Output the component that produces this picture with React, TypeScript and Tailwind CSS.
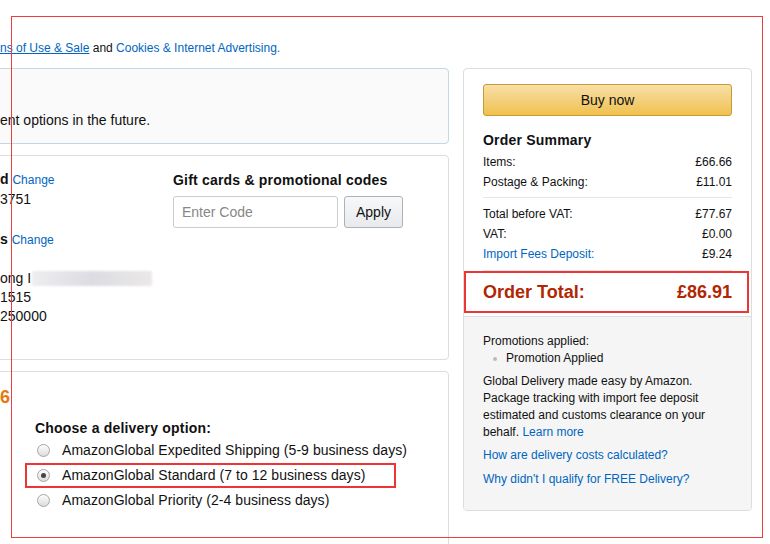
const Radio = ({ checked }: { checked?: boolean }) => (
  <span className="ml-[2px] flex size-[13px] shrink-0 items-center justify-center rounded-full border border-[#a6a6a6] bg-gradient-to-b from-[#fdfdfd] to-[#dcdcdc]">
    {checked && <span className="size-[5px] rounded-full bg-[#444]" />}
  </span>
);

const Row = ({ label, value, link }: { label: string; value: string; link?: boolean }) => (
  <div className="flex h-5 items-center justify-between text-[12px]">
    <span className={link ? "text-[#0066c0]" : ""}>{label}</span>
    <span>{value}</span>
  </div>
);

const options = [
  { label: "AmazonGlobal Expedited Shipping (5-9 business days)", checked: false },
  { label: "AmazonGlobal Standard (7 to 12 business days)", checked: true },
  { label: "AmazonGlobal Priority (2-4 business days)", checked: false },
];

export default function App() {
  return (
    <div className="relative h-[544px] w-[770px] overflow-hidden bg-white pt-10 font-['Liberation_Sans',Arial,sans-serif] text-[#111]">
      {/* terms line */}
      <p className="h-4 text-[12px] leading-4">
        <span className="text-[#0066c0] underline decoration-[#0066c0]">ns of Use &amp; Sale</span> and{" "}
        <span className="text-[#0066c0]">Cookies &amp; Internet Advertising.</span>
      </p>

      <div className="mt-3 flex gap-[14px]">
        {/* left column */}
        <div className="-ml-[10px] flex w-[459px] shrink-0 flex-col">
          <div className="h-[76px] rounded-[4px] border border-[#c3d8e3] bg-[#fafafa] pl-[9px] pt-[41px] text-[14px] leading-5">
            ent options in the future.
          </div>

          <div className="mt-[11px] flex h-[205px] rounded-[4px] border border-[#dddddd] bg-white pl-[9px] pt-[14px]">
            <div className="w-[173px] shrink-0 text-[14px] leading-[19px]">
              <div>
                <span className="font-bold">d</span>{" "}
                <span className="text-[12px] text-[#0066c0]">Change</span>
              </div>
              <div>3751</div>
              <div className="mt-[21px]">
                <span className="font-bold">s</span>{" "}
                <span className="text-[12px] text-[#0066c0]">Change</span>
              </div>
              <div className="mt-[19px] flex items-center">
                <span>ong I</span>
                <span className="ml-[1px] inline-block h-[15px] w-[120px] bg-gradient-to-r from-[#eeeef0] via-[#dcdce2] to-[#ebe8e8] blur-[1px]" />
              </div>
              <div>1515</div>
              <div>250000</div>
            </div>
            <div className="flex flex-col">
              <div className="text-[14px] font-bold leading-5 tracking-[0.2px]">Gift cards &amp; promotional codes</div>
              <div className="mt-[6px] flex gap-[6px]">
                <input
                  placeholder="Enter Code"
                  className="h-8 w-[165px] rounded-[3px] border border-[#cccccc] px-2 text-[14px] outline-none placeholder:text-[#888]"
                />
                <button className="h-8 w-[59px] rounded-[3px] border border-[#adb1b8] bg-gradient-to-b from-[#f7f8fa] to-[#e7e9ec] text-[14px] text-[#111]">
                  Apply
                </button>
              </div>
            </div>
          </div>

          <div className="mt-[11px] flex h-[200px] rounded-[4px] border border-[#dddddd] bg-white">
            <div className="w-[44px] shrink-0 pl-[9px] pt-[13px] text-[18px] font-bold leading-6 text-[#e47911]">6</div>
            <div className="flex flex-col pt-[47px]">
              <div className="mb-[1px] text-[14px] font-bold leading-[18px] tracking-[0.2px]">Choose a delivery option:</div>
              {options.map((o) => (
                <div
                  key={o.label}
                  className={`-ml-[10px] flex h-[25px] w-[371px] items-center gap-3 whitespace-nowrap border-2 pl-[8px] text-[14px] tracking-[0.05px] ${
                    o.checked ? "border-[#ee3535]" : "border-transparent"
                  }`}
                >
                  <Radio checked={o.checked} />
                  <span>{o.label}</span>
                </div>
              ))}
            </div>
          </div>
        </div>

        {/* right column */}
        <div className="flex h-[443px] w-[289px] shrink-0 flex-col overflow-hidden rounded-[4px] border border-[#dddddd]">
          <div className="px-[19px] pt-[15px]">
            <button className="h-8 w-full rounded-[3px] border border-[#c89a35] bg-gradient-to-b from-[#f7dfa5] to-[#f0c14b] text-[14px] text-[#111]">
              Buy now
            </button>
            <div className="mt-[14px] text-[14px] font-bold leading-5 tracking-[0.2px]">Order Summary</div>
            <div className="mt-[2px]" />
            <Row label="Items:" value="£66.66" />
            <Row label="Postage & Packing:" value="£11.01" />
            <div className="mt-[5px] mb-[6px] border-t border-[#e7e7e7]" />
            <Row label="Total before VAT:" value="£77.67" />
            <Row label="VAT:" value="£0.00" />
            <Row label="Import Fees Deposit:" value="£9.24" link />
            <div className="mt-[6px] border-t border-[#e7e7e7]" />
            <div className="-ml-[19px] -mr-[17px] flex h-[42px] items-center justify-between border-2 border-[#ee3535] pl-[17px] pr-[15px] text-[18px] font-bold text-[#b12704]">
              <span>Order Total:</span>
              <span>£86.91</span>
            </div>
          </div>
          <div className="mt-[3px] flex-1 border-t border-[#dddddd] bg-[#f5f5f5] px-[19px] pt-[16px] text-[12px] leading-[17px]">
            <div>Promotions applied:</div>
            <div className="flex items-center pl-[10px]">
              <span className="size-[4px] rounded-full bg-[#bbbbbb]" />
              <span className="ml-[9px]">Promotion Applied</span>
            </div>
            <p className="mt-[6px]">
              Global Delivery made easy by Amazon. Package tracking with import fee deposit estimated and customs
              clearance on your behalf. <span className="text-[#0066c0]">Learn more</span>
            </p>
            <div className="mt-[6px] text-[#0066c0]">How are delivery costs calculated?</div>
            <div className="mt-[7px] text-[#0066c0]">Why didn't I qualify for FREE Delivery?</div>
          </div>
        </div>
      </div>

      {/* red annotation frame */}
      <div className="pointer-events-none absolute left-[11px] top-[16px] h-[522px] w-[752px] border border-[#f03c3c]" />
    </div>
  );
}
